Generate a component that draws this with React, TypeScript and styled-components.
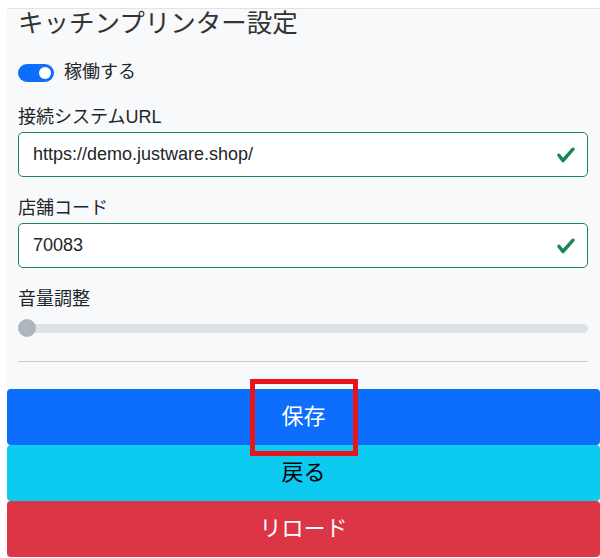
import React, { useState } from 'react';
import styled, { createGlobalStyle } from 'styled-components';

const GlobalStyle = createGlobalStyle`
  html, body {
    margin: 0;
    padding: 0;
    background: #ffffff;
  }
  body {
    font-family: "Liberation Sans", "Noto Sans CJK JP", sans-serif;
    color: #212529;
  }
`;

const CheckIcon: React.FC = () => (
  <svg width="20" height="20" viewBox="0 0 8 8" aria-hidden="true">
    <path
      fill="#198754"
      d="M2.3 6.73.6 4.53c-.4-1.04.46-1.4 1.1-.8l1.1 1.4 3.4-3.8c.6-.63 1.6-.27 1.2.7l-4 4.6c-.43.5-.8.4-1.1.1z"
    />
  </svg>
);

type FieldProps = { label: string; value: string; onChange: (v: string) => void };

const Field: React.FC<FieldProps> = ({ label, value, onChange }) => (
  <Group>
    <Label>{label}</Label>
    <InputBox>
      <TextInput value={value} onChange={(e) => onChange(e.target.value)} />
      <CheckIcon />
    </InputBox>
  </Group>
);

export default function App() {
  const [active, setActive] = useState<boolean>(true);
  const [url, setUrl] = useState<string>('https://demo.justware.shop/');
  const [shop, setShop] = useState<string>('70083');
  const [volume] = useState<number>(0);

  return (
    <Page>
      <GlobalStyle />
      <Panel>
        <Form>
          <Title>キッチンプリンター設定</Title>
          <SwitchRow onClick={() => setActive(!active)}>
            <Switch $on={active} />
            <SwitchLabel>稼働する</SwitchLabel>
          </SwitchRow>
          <Field label="接続システムURL" value={url} onChange={setUrl} />
          <Field label="店舗コード" value={shop} onChange={setShop} />
          <Group>
            <Label>音量調整</Label>
            <Slider>
              <Track />
              <Thumb style={{ left: `${volume}%` }} />
            </Slider>
          </Group>
          <Divider />
        </Form>
        <Buttons>
          <ActionButton $variant="primary" $raised>
            保存
            <Highlight />
          </ActionButton>
          <ActionButton $variant="info">戻る</ActionButton>
          <ActionButton $variant="danger">リロード</ActionButton>
        </Buttons>
      </Panel>
    </Page>
  );
}

const Page = styled.div`
  padding: 8px 0 0 7px;
  width: 600px;
  box-sizing: border-box;
`;

const Panel = styled.div`
  background: #f8f9fa;
  border-top: 1px solid #e2e3e5;
`;

const Form = styled.div`
  padding: 0 12px 0 11px;
  display: flex;
  flex-direction: column;
`;

const Title = styled.h4`
  margin: -1px 0 0;
  font-size: 25.5px;
  line-height: 30px;
  font-weight: 400;
  color: #333333;
`;

const SwitchRow = styled.label`
  display: flex;
  align-items: center;
  gap: 10px;
  height: 27px;
  margin-top: 21px;
  cursor: pointer;
`;

const Switch = styled.span<{ $on: boolean }>`
  position: relative;
  width: 36px;
  height: 18px;
  border-radius: 9px;
  background: ${(p) => (p.$on ? '#0d6efd' : '#dee2e6')};
  flex-shrink: 0;

  &::after {
    content: '';
    position: absolute;
    top: 3px;
    left: ${(p) => (p.$on ? '21px' : '3px')};
    width: 12px;
    height: 12px;
    border-radius: 50%;
    background: #ffffff;
  }
`;

const SwitchLabel = styled.span`
  font-size: 18px;
  line-height: 27px;
`;

const Group = styled.div`
  display: flex;
  flex-direction: column;
  margin-top: 18px;
`;

const Label = styled.label`
  font-size: 18px;
  line-height: 27px;
  margin-bottom: 1px;
`;

const InputBox = styled.div`
  display: flex;
  align-items: center;
  height: 45px;
  box-sizing: border-box;
  border: 1px solid #198754;
  border-radius: 5px;
  background: #ffffff;
  padding: 0 11px 0 14px;
`;

const TextInput = styled.input`
  flex: 1;
  border: none;
  outline: none;
  background: transparent;
  padding: 0;
  font-family: "Liberation Sans", "Noto Sans CJK JP", sans-serif;
  font-size: 18px;
  color: #212529;
`;

const Slider = styled.div`
  position: relative;
  height: 18px;
  margin-top: 5px;
  display: flex;
  align-items: center;
`;

const Track = styled.div`
  width: 100%;
  height: 9px;
  border-radius: 5px;
  background: #dee2e6;
`;

const Thumb = styled.span`
  position: absolute;
  top: 0;
  width: 18px;
  height: 18px;
  border-radius: 50%;
  background: #adb5bd;
`;

const Divider = styled.hr`
  margin: 24px 0 0;
  border: none;
  border-top: 1px solid #c9cacc;
`;

const Buttons = styled.div`
  display: flex;
  flex-direction: column;
  margin-top: 27px;
`;

const colors = {
  primary: { bg: '#0d6efd', fg: '#ffffff' },
  info: { bg: '#0dcaf0', fg: '#000000' },
  danger: { bg: '#dc3545', fg: '#ffffff' },
};

const ActionButton = styled.button<{ $variant: keyof typeof colors; $raised?: boolean }>`
  position: relative;
  z-index: ${(p) => (p.$raised ? 2 : 1)};
  display: block;
  width: 100%;
  border: none;
  border-radius: 4px;
  padding: 11px 0;
  font-family: "Liberation Sans", "Noto Sans CJK JP", sans-serif;
  font-size: 22px;
  line-height: 34px;
  background: ${(p) => colors[p.$variant].bg};
  color: ${(p) => colors[p.$variant].fg};
  cursor: pointer;
`;

const Highlight = styled.span`
  position: absolute;
  top: -10px;
  left: 50%;
  transform: translateX(-50%);
  width: 108px;
  height: 77px;
  box-sizing: border-box;
  border: 5px solid #e8141c;
  pointer-events: none;
`;
